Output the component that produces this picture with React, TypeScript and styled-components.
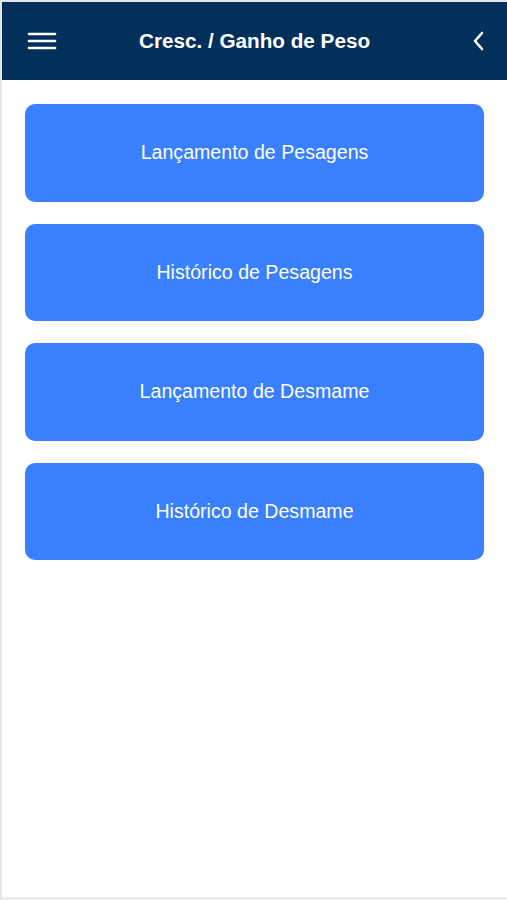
import styled, { createGlobalStyle } from 'styled-components';

const GlobalStyle = createGlobalStyle`
  html, body {
    margin: 0;
    padding: 0;
    background: #ffffff;
  }
  * {
    box-sizing: border-box;
  }
`;

const Screen = styled.div`
  width: 507px;
  height: 900px;
  display: flex;
  flex-direction: column;
  background: #ffffff;
  border-top: 2px solid #e4e6ea;
  border-left: 2px solid #e6e6e6;
  border-bottom: 3px solid #ececec;
  font-family: 'Liberation Sans', Arial, sans-serif;
`;

const Header = styled.header`
  height: 78px;
  flex-shrink: 0;
  display: grid;
  grid-template-columns: 1fr auto 1fr;
  align-items: center;
  padding: 0 12px;
  background: #03305b;
  color: #ffffff;
`;

const Title = styled.h1`
  margin: 0;
  font-size: 20.7px;
  font-weight: 700;
`;

const IconButton = styled.button`
  width: 32px;
  height: 32px;
  padding: 0;
  border: none;
  background: transparent;
  display: flex;
  align-items: center;
  justify-content: center;
  cursor: pointer;
`;

const MenuToggle = styled(IconButton)`
  justify-self: start;
  margin-left: 12px;
`;

const BackButton = styled(IconButton)`
  justify-self: end;
`;

const Menu = styled.div`
  display: flex;
  flex-direction: column;
  gap: 22px;
  padding: 24px 23px 0 23px;
`;

const MenuButton = styled.button`
  height: 97.5px;
  border: none;
  border-radius: 10px;
  background: #3a7ffd;
  color: #ffffff;
  font-family: 'Liberation Sans', Arial, sans-serif;
  font-size: 19.6px;
  cursor: pointer;
`;

const ITEMS = ['Lançamento de Pesagens', 'Histórico de Pesagens', 'Lançamento de Desmame', 'Histórico de Desmame'];

export default function App() {
  return (
    <>
      <GlobalStyle />
      <Screen>
        <Header>
          <MenuToggle aria-label="menu">
            <svg width="30" height="20" viewBox="0 0 30 20">
              <g stroke="#ffffff" strokeWidth="2.6" strokeLinecap="round">
                <line x1="2" y1="3" x2="28" y2="3" />
                <line x1="2" y1="10" x2="28" y2="10" />
                <line x1="2" y1="17" x2="28" y2="17" />
              </g>
            </svg>
          </MenuToggle>
          <Title>Cresc. / Ganho de Peso</Title>
          <BackButton aria-label="voltar">
            <svg width="14" height="20" viewBox="0 0 14 20">
              <polyline points="10,2 3,10 10,18" fill="none" stroke="#ffffff" strokeWidth="2.6" strokeLinecap="round" strokeLinejoin="round" />
            </svg>
          </BackButton>
        </Header>
        <Menu>
          {ITEMS.map((label) => (
            <MenuButton key={label}>{label}</MenuButton>
          ))}
        </Menu>
      </Screen>
    </>
  );
}
